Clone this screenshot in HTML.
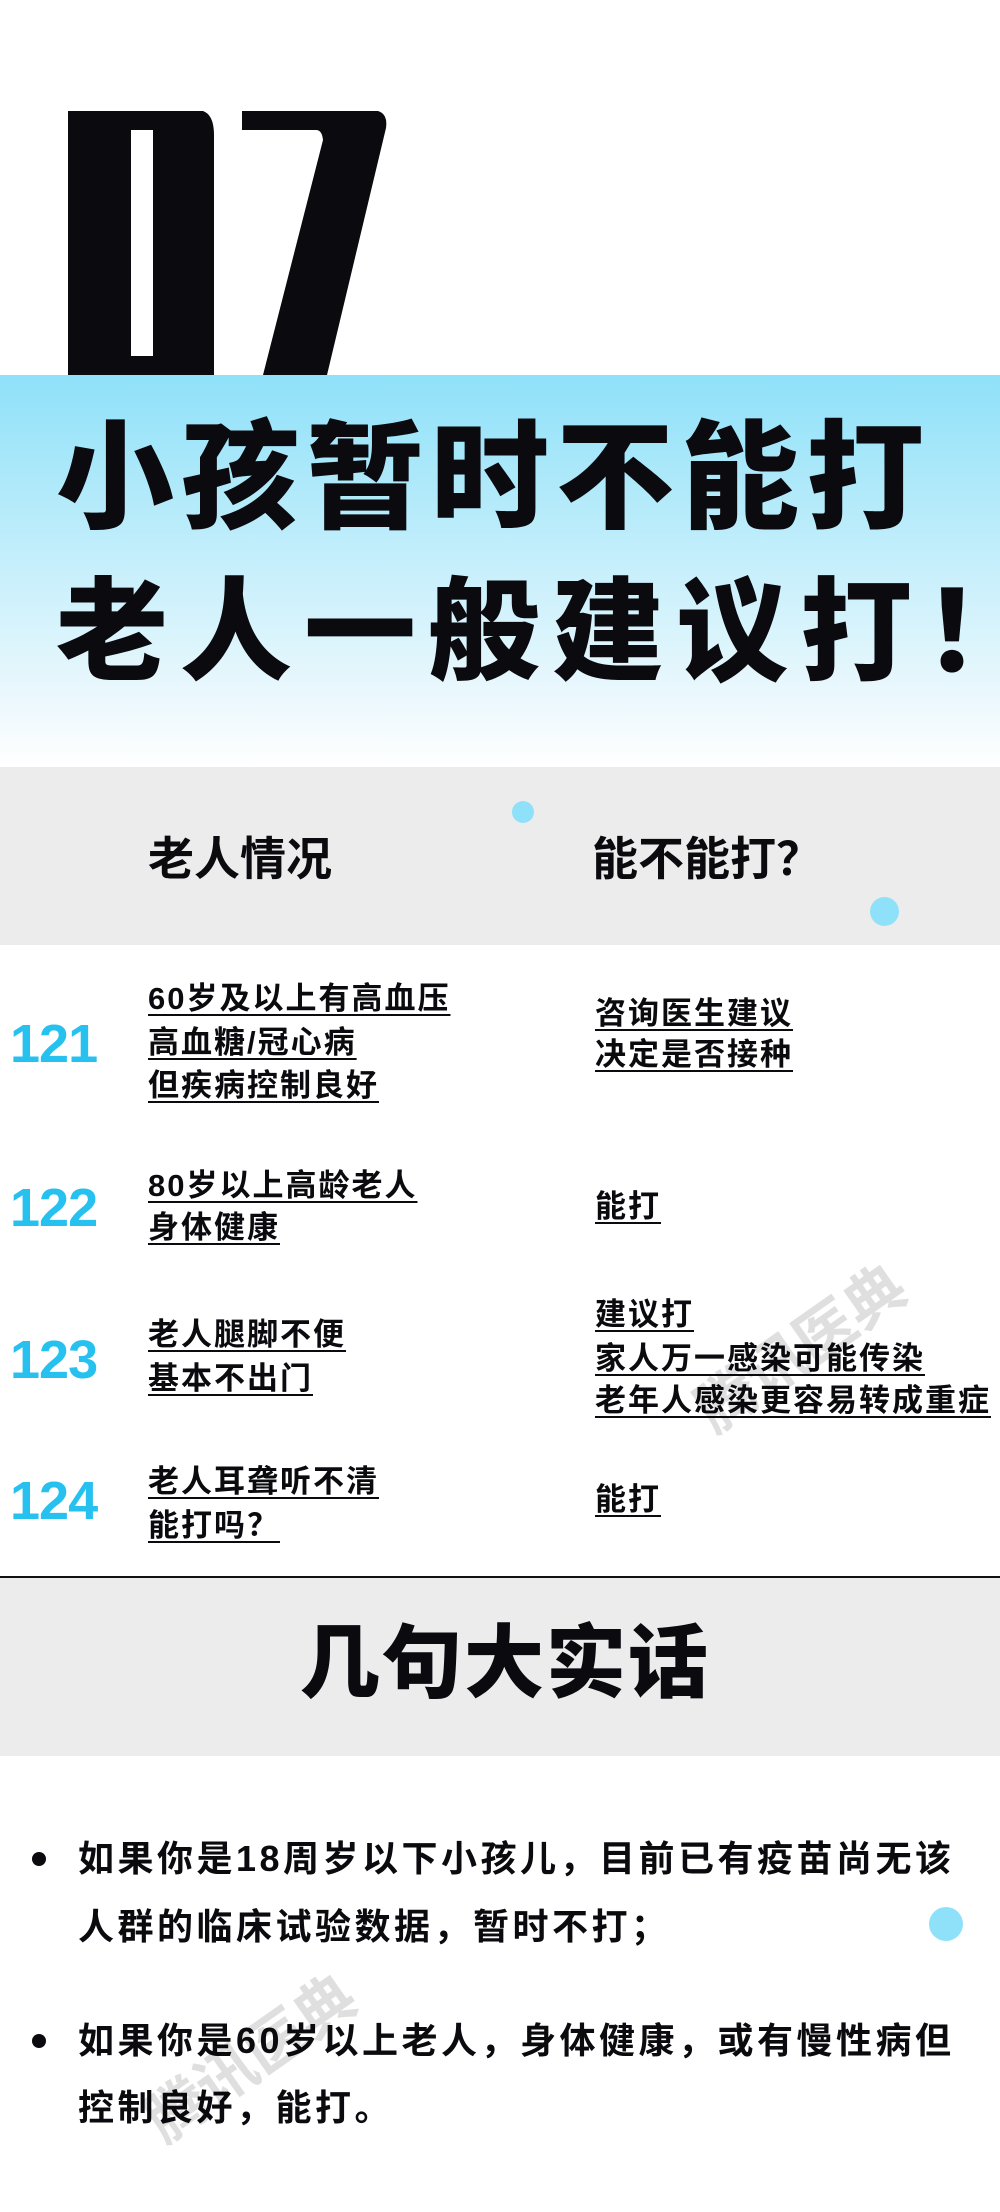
<!DOCTYPE html>
<html><head><meta charset="utf-8"><style>
*{margin:0;padding:0;box-sizing:border-box}
body{width:1000px;height:2212px;position:relative;background:#fff;font-family:"Liberation Sans","Noto Sans CJK SC",sans-serif;color:#0a0a0f;overflow:hidden}
.abs{position:absolute}
.band{left:0;top:375px;width:1000px;height:392px;background:linear-gradient(#8fe1f9 0%,#c2eefb 45%,#eef9fd 85%,#fff 100%)}
.title{left:56px;font-weight:900;white-space:nowrap;line-height:1}
.grey{left:0;width:1000px;background:#ececec}
.hd{font-size:46px;font-weight:700;line-height:1;top:836px}
.dot{border-radius:50%;background:#8fe1f9}
.num{left:10px;font-size:54px;font-weight:700;color:#27c1f0;line-height:1;letter-spacing:-1px}
.t{font-size:31px;font-weight:700;line-height:1;white-space:nowrap;letter-spacing:2px;text-decoration:underline;text-decoration-thickness:2px;text-underline-offset:5px}
.L{left:148px}.R{left:595px}
.b{left:78px;font-size:36px;font-weight:700;letter-spacing:3.5px;line-height:1;white-space:nowrap}
.bul{width:14px;height:14px;border-radius:50%;background:#0a0a0f;left:32px}
.wm{color:#000;opacity:.12;font-size:60px;font-weight:700;white-space:nowrap;transform:rotate(-35deg);transform-origin:left center}
</style></head><body>
<div class="abs band"></div>
<svg class="abs" style="left:0;top:0" width="1000" height="380">
<path d="M68 111 H203 Q214 115 214 135 V375 H68 Z M131 130 V356 H153 V130 Z" fill="#0a0a0f" fill-rule="evenodd"/>
<path d="M242 111 H378 Q388 114 386 128 L327 375 H263 L323 140 Q322 130 316 130 H242 Z" fill="#0a0a0f"/>
</svg>
<div class="abs title" style="top:420px;font-size:118px;letter-spacing:7px">小孩暂时不能打</div>
<div class="abs title" style="top:577px;font-size:112px;letter-spacing:12px">老人一般建议打！</div>
<div class="abs grey" style="top:767px;height:178px"></div>
<div class="abs hd" style="left:148px">老人情况</div>
<div class="abs hd" style="left:592px">能不能打？</div>
<div class="abs dot" style="left:512px;top:801px;width:22px;height:22px"></div>
<div class="abs dot" style="left:870px;top:897px;width:29px;height:29px"></div>

<div class="abs num" style="top:1017px">121</div>
<div class="abs t L" style="top:983px">60岁及以上有高血压</div>
<div class="abs t L" style="top:1027px">高血糖/冠心病</div>
<div class="abs t L" style="top:1070px">但疾病控制良好</div>
<div class="abs t R" style="top:998px">咨询医生建议</div>
<div class="abs t R" style="top:1039px">决定是否接种</div>

<div class="abs num" style="top:1181px">122</div>
<div class="abs t L" style="top:1170px">80岁以上高龄老人</div>
<div class="abs t L" style="top:1212px">身体健康</div>
<div class="abs t R" style="top:1191px">能打</div>

<div class="abs num" style="top:1333px">123</div>
<div class="abs t L" style="top:1319px">老人腿脚不便</div>
<div class="abs t L" style="top:1363px">基本不出门</div>
<div class="abs t R" style="top:1299px">建议打</div>
<div class="abs t R" style="top:1343px">家人万一感染可能传染</div>
<div class="abs t R" style="top:1385px">老年人感染更容易转成重症</div>

<div class="abs num" style="top:1474px">124</div>
<div class="abs t L" style="top:1466px">老人耳聋听不清</div>
<div class="abs t L" style="top:1510px">能打吗？</div>
<div class="abs t R" style="top:1484px">能打</div>

<div class="abs" style="left:0;top:1576px;width:1000px;height:2px;background:#111"></div>
<div class="abs grey" style="top:1578px;height:178px"></div>
<div class="abs title" style="left:300px;top:1624px;font-size:80px;letter-spacing:2px">几句大实话</div>

<div class="abs bul" style="top:1852px"></div>
<div class="abs b" style="top:1841px">如果你是18周岁以下小孩儿，目前已有疫苗尚无该</div>
<div class="abs b" style="top:1909px">人群的临床试验数据，暂时不打；</div>
<div class="abs dot" style="left:929px;top:1907px;width:34px;height:34px"></div>
<div class="abs bul" style="top:2034px"></div>
<div class="abs b" style="top:2023px">如果你是60岁以上老人，身体健康，或有慢性病但</div>
<div class="abs b" style="top:2090px">控制良好，能打。</div>

<div class="abs wm" style="left:700px;top:1370px">腾讯医典</div>
<div class="abs wm" style="left:150px;top:2080px">腾讯医典</div>
</body></html>
